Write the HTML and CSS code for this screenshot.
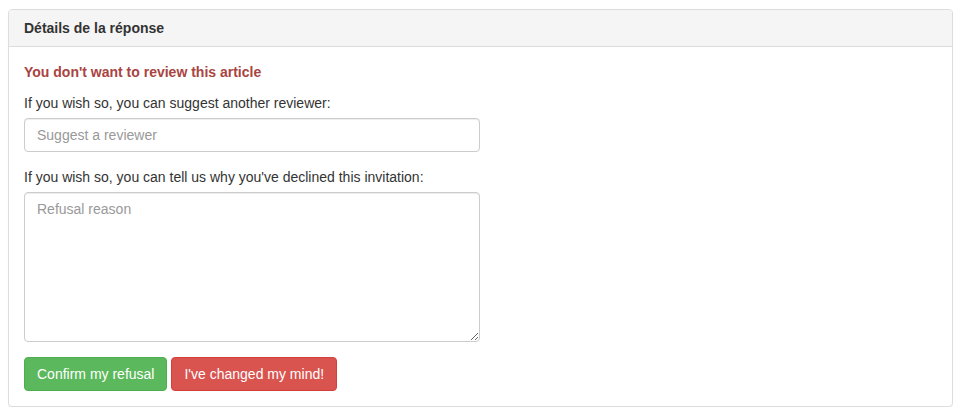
FILE: index.html
```html
<!DOCTYPE html>
<html lang="fr">
<head>
<meta charset="utf-8">
<link rel="stylesheet" href="styles.css">
</head>
<body>
<div class="panel">
  <div class="panel-heading">Détails de la réponse</div>
  <div class="panel-body">
    <p class="refusal-title">You don't want to review this article</p>
    <div class="form-group">
      <label class="form-label">If you wish so, you can suggest another reviewer:</label>
      <input class="form-control" type="text" placeholder="Suggest a reviewer">
    </div>
    <div class="form-group">
      <label class="form-label">If you wish so, you can tell us why you've declined this invitation:</label>
      <textarea class="form-control textarea" placeholder="Refusal reason"></textarea>
    </div>
    <div class="actions">
      <button class="btn btn-success" type="button">Confirm my refusal</button>
      <button class="btn btn-danger" type="button">I've changed my mind!</button>
    </div>
  </div>
</div>
</body>
</html>
```

FILE: styles.css
```css
* { box-sizing: border-box; }
html, body { margin: 0; padding: 0; background: #fff; }
body {
  padding: 9px 8px 0 8px;
  font-family: "Liberation Sans", Arial, sans-serif;
  font-size: 14px;
  line-height: 20px;
  color: #333;
}
.panel {
  border: 1px solid #ddd;
  border-radius: 4px;
  background: #fff;
  box-shadow: 0 1px 1px rgba(0,0,0,.05);
}
.panel-heading {
  background: #f5f5f5;
  border-bottom: 1px solid #ddd;
  border-radius: 3px 3px 0 0;
  padding: 8px 15px;
  font-weight: bold;
  color: #333;
}
.panel-body {
  padding: 15px;
}
.refusal-title {
  margin: 0 0 11px 0;
  color: #a94442;
  font-weight: bold;
}
.form-group {
  margin-bottom: 15px;
}
.form-label {
  display: block;
  margin-bottom: 5px;
  font-weight: normal;
}
.form-control {
  display: block;
  width: 456px;
  height: 34px;
  padding: 6px 12px;
  font-family: inherit;
  font-size: 14px;
  line-height: 20px;
  color: #555;
  background: #fff;
  border: 1px solid #ccc;
  border-radius: 4px;
  box-shadow: inset 0 1px 1px rgba(0,0,0,.075);
  margin: 0;
}
.form-control::placeholder { color: #999; }
.textarea {
  height: 150px;
  resize: vertical;
}
.actions {
  display: flex;
  gap: 4px;
}
.btn {
  height: 34px;
  padding: 6px 12px;
  font-family: inherit;
  font-size: 14px;
  line-height: 20px;
  color: #fff;
  border: 1px solid transparent;
  border-radius: 4px;
  cursor: pointer;
}
.btn-success { background: #5cb85c; border-color: #4cae4c; }
.btn-danger { background: #d9534f; border-color: #d43f3a; }
```
